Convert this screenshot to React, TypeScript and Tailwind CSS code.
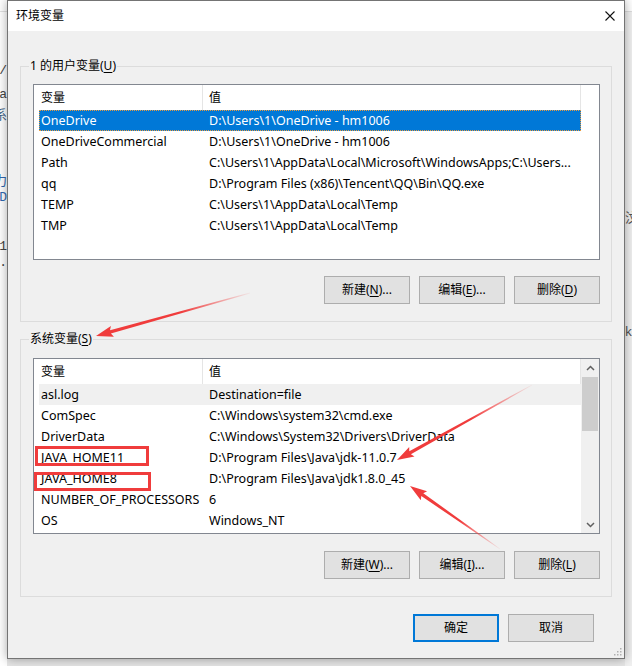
import React from "react";

type Row = { name: string; value: string; state?: "selected" | "inactive" };

const userRows: Row[] = [
  { name: "OneDrive", value: "D:\\Users\\1\\OneDrive - hm1006", state: "selected" },
  { name: "OneDriveCommercial", value: "D:\\Users\\1\\OneDrive - hm1006" },
  { name: "Path", value: "C:\\Users\\1\\AppData\\Local\\Microsoft\\WindowsApps;C:\\Users..." },
  { name: "qq", value: "D:\\Program Files (x86)\\Tencent\\QQ\\Bin\\QQ.exe" },
  { name: "TEMP", value: "C:\\Users\\1\\AppData\\Local\\Temp" },
  { name: "TMP", value: "C:\\Users\\1\\AppData\\Local\\Temp" },
];

const systemRows: Row[] = [
  { name: "asl.log", value: "Destination=file", state: "inactive" },
  { name: "ComSpec", value: "C:\\Windows\\system32\\cmd.exe" },
  { name: "DriverData", value: "C:\\Windows\\System32\\Drivers\\DriverData" },
  { name: "JAVA_HOME11", value: "D:\\Program Files\\Java\\jdk-11.0.7" },
  { name: "JAVA_HOME8", value: "D:\\Program Files\\Java\\jdk1.8.0_45" },
  { name: "NUMBER_OF_PROCESSORS", value: "6" },
  { name: "OS", value: "Windows_NT" },
];

const Key = ({ k }: { k: string }) => (
  <span className="underline underline-offset-2 decoration-1">{k}</span>
);

const Btn = ({
  children,
  primary,
}: {
  children: React.ReactNode;
  primary?: boolean;
}) => (
  <button
    className={`w-[86px] h-[28px] bg-[#e1e1e1] flex items-center justify-center leading-none ${
      primary ? "border-2 border-[#0078d7]" : "border border-[#adadad]"
    }`}
  >
    {children}
  </button>
);

const Chevron = ({ down }: { down?: boolean }) => (
  <svg width="9" height="6" viewBox="0 0 9 6">
    <polyline
      points={down ? "1,1 4.5,4.5 8,1" : "1,5 4.5,1.5 8,5"}
      fill="none"
      stroke="#606060"
      strokeWidth="1.5"
    />
  </svg>
);

const Scrollbar = () => (
  <div className="flex-1 h-full bg-[#f0f0f0] flex flex-col">
    <div className="h-[18px] flex items-center justify-center">
      <Chevron />
    </div>
    <div className="mx-[1px] h-[54px] bg-[#cdcdcd]" />
    <div className="flex-1" />
    <div className="h-[17px] flex items-center justify-center">
      <Chevron down />
    </div>
  </div>
);

const VarList = ({ rows, scroll }: { rows: Row[]; scroll?: boolean }) => (
  <div className="h-[176px] border border-[#828790] bg-white flex overflow-hidden">
    <div className="w-[547px] shrink-0 flex flex-col">
      <div className="h-[25px] flex">
        <div className="w-[169px] flex items-center pl-[7px] border-r border-[#e5e5e5]">
          变量
        </div>
        <div className="w-[378px] flex items-center pl-[6px] border-r border-[#e5e5e5]">
          值
        </div>
      </div>
      {rows.map((r) => (
        <div
          key={r.name}
          className={`ml-[5px] w-[542px] h-[21px] pt-[2px] flex items-center whitespace-nowrap text-[12.5px] ${
            r.state === "selected"
              ? "bg-[#0078d7] text-white outline-1 outline-dotted outline-[#e99b3f] -outline-offset-1"
              : r.state === "inactive"
              ? "bg-[#f0f0f0]"
              : ""
          }`}
        >
          <div className="w-[163px] pl-[2px] overflow-hidden">{r.name}</div>
          <div className="flex-1 pl-[7px] overflow-hidden">{r.value}</div>
        </div>
      ))}
    </div>
    {scroll && <Scrollbar />}
  </div>
);

function arrowPoints(tx: number, ty: number, hx: number, hy: number) {
  const dx = hx - tx;
  const dy = hy - ty;
  const len = Math.hypot(dx, dy);
  const ux = dx / len;
  const uy = dy / len;
  const nx = -uy;
  const ny = ux;
  const neckX = hx - ux * 15;
  const neckY = hy - uy * 15;
  const wingX = hx - ux * 17;
  const wingY = hy - uy * 17;
  const p = (x: number, y: number) => `${x.toFixed(1)},${y.toFixed(1)}`;
  return [
    p(tx + nx * 0.4, ty + ny * 0.4),
    p(neckX + nx * 1.7, neckY + ny * 1.7),
    p(wingX + nx * 5.5, wingY + ny * 5.5),
    p(hx, hy),
    p(wingX - nx * 5.5, wingY - ny * 5.5),
    p(neckX - nx * 1.7, neckY - ny * 1.7),
    p(tx - nx * 0.4, ty - ny * 0.4),
  ].join(" ");
}

const arrows = [
  { id: "a1", t: [250, 293], h: [96, 336] },
  { id: "a2", t: [532, 385], h: [397, 460] },
  { id: "a3", t: [500, 549], h: [410, 486] },
];

const Overlay = () => (
  <svg
    className="absolute inset-0 pointer-events-none z-20"
    width="632"
    height="666"
    viewBox="0 0 632 666"
  >
    <defs>
      {arrows.map((a) => (
        <linearGradient
          key={a.id}
          id={a.id}
          gradientUnits="userSpaceOnUse"
          x1={a.t[0]}
          y1={a.t[1]}
          x2={a.h[0]}
          y2={a.h[1]}
        >
          <stop offset="0" stopColor="#f03c3c" stopOpacity="0.05" />
          <stop offset="0.45" stopColor="#f03c3c" stopOpacity="1" />
          <stop offset="1" stopColor="#f03c3c" stopOpacity="1" />
        </linearGradient>
      ))}
    </defs>
    <rect x="36.5" y="447.5" width="111" height="17" fill="none" stroke="#f03c3c" strokeWidth="3" />
    <rect x="35.5" y="473.5" width="114" height="16" fill="none" stroke="#f03c3c" strokeWidth="3" />
    {arrows.map((a) => (
      <polygon key={a.id} points={arrowPoints(a.t[0], a.t[1], a.h[0], a.h[1])} fill={`url(#${a.id})`} />
    ))}
  </svg>
);

export default function App() {
  return (
    <div className="relative w-[632px] h-[666px] overflow-hidden bg-[#e6e6e6] flex items-start text-[12px] text-black font-['Noto_Sans','Noto_Sans_CJK_SC',sans-serif]">
      {/* desktop behind, left edge */}
      <div className="w-[7px] h-[666px] shrink-0 bg-white overflow-hidden flex flex-col items-end text-[13px] leading-[14px] text-[#444] font-['Liberation_Mono','Noto_Sans_CJK_SC',monospace]">
        <div className="h-[12px] w-full shrink-0 border-b border-[#e2e2e2]" />
        <span className="mt-[52px] whitespace-nowrap">ㄏ/</span>
        <span className="mt-[10px] whitespace-nowrap">pa</span>
        <span className="mt-[7px] whitespace-nowrap text-[#3d5f86]">系</span>
        <span className="mt-[52px] whitespace-nowrap text-[#2f68b0]">力</span>
        <span className="mt-[2px] whitespace-nowrap text-[#2f68b0]">D</span>
        <span className="mt-[35px] whitespace-nowrap">1</span>
        <span className="mt-[2px] whitespace-nowrap">a.</span>
      </div>

      {/* dialog */}
      <div className="relative z-10 w-[618px] h-[659px] shrink-0 border border-[#747474] bg-[#f0f0f0] flex flex-col shadow-[0_0_10px_rgba(0,0,0,0.35)]">
        <div className="h-[30px] shrink-0 bg-white flex items-center justify-between pl-[8px] pr-[9px]">
          <span>环境变量</span>
          <svg width="10" height="10" viewBox="0 0 10 10">
            <path d="M0.5 0.5 L9.5 9.5 M9.5 0.5 L0.5 9.5" stroke="#111" strokeWidth="1.1" />
          </svg>
        </div>

        <div className="flex-1 flex flex-col pt-[35px] px-[12px]">
          <div className="relative border border-[#dcdcdc] pl-[12px] pr-[11px] pt-[17px] pb-[17px]">
            <span className="absolute left-[8px] -top-[9px] px-[1px] leading-[16px] bg-[#f0f0f0]">
              1 的用户变量(<Key k="U" />)
            </span>
            <VarList rows={userRows} />
            <div className="flex justify-end gap-[9px] mt-[16px]">
              <Btn>
                新建(<Key k="N" />)...
              </Btn>
              <Btn>
                编辑(<Key k="E" />)...
              </Btn>
              <Btn>
                删除(<Key k="D" />)
              </Btn>
            </div>
          </div>

          <div className="relative mt-[17px] border border-[#dcdcdc] pl-[12px] pr-[11px] pt-[18px] pb-[17px]">
            <span className="absolute left-[8px] -top-[9px] px-[1px] leading-[16px] bg-[#f0f0f0]">
              系统变量(<Key k="S" />)
            </span>
            <VarList rows={systemRows} scroll />
            <div className="flex justify-end gap-[9px] mt-[17px]">
              <Btn>
                新建(<Key k="W" />)...
              </Btn>
              <Btn>
                编辑(<Key k="I" />)...
              </Btn>
              <Btn>
                删除(<Key k="L" />)
              </Btn>
            </div>
          </div>

          <div className="flex justify-end gap-[9px] pr-[18px] mt-[17px]">
            <Btn primary>确定</Btn>
            <Btn>取消</Btn>
          </div>
        </div>

        <svg className="absolute right-[2px] bottom-[2px]" width="9" height="9" viewBox="0 0 9 9">
          <rect x="7" y="1" width="1.5" height="1.5" fill="#b0b0b0" />
          <rect x="4" y="4" width="1.5" height="1.5" fill="#b0b0b0" />
          <rect x="7" y="4" width="1.5" height="1.5" fill="#b0b0b0" />
          <rect x="1" y="7" width="1.5" height="1.5" fill="#b0b0b0" />
          <rect x="4" y="7" width="1.5" height="1.5" fill="#b0b0b0" />
          <rect x="7" y="7" width="1.5" height="1.5" fill="#b0b0b0" />
        </svg>
      </div>

      {/* desktop behind, right edge */}
      <div className="flex-1 h-[666px] bg-[#f0f0f0] overflow-hidden flex flex-col items-start text-[13px] leading-[14px] text-[#555]">
        <div className="h-[12px] w-full shrink-0 bg-white border-b border-[#dddddd]" />
        <span className="mt-[198px] whitespace-nowrap">汶</span>
        <span className="mt-[100px] whitespace-nowrap">k</span>
      </div>

      <Overlay />
    </div>
  );
}
